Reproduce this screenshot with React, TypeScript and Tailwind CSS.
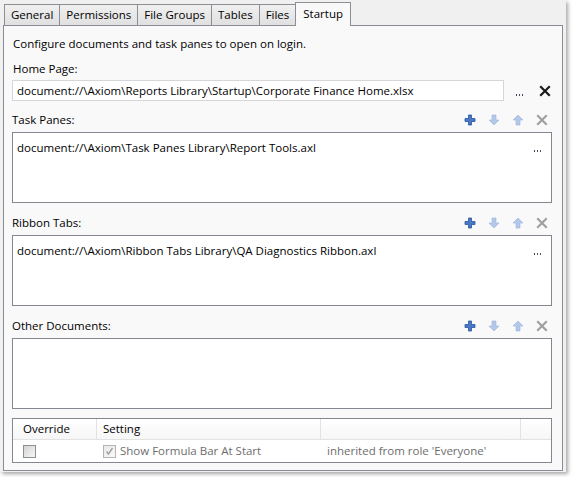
import React from 'react';

const font = { fontFamily: '"Open Sans", "Noto Sans", sans-serif' };

const tabs = ['General', 'Permissions', 'File Groups', 'Tables', 'Files'];

function PlusIcon() {
    return (
        <svg width="12" height="12" viewBox="0 0 12 12">
            <path d="M4.5 1h3v3.5H11v3H7.5V11h-3V7.5H1v-3h3.5z" fill="#4a78c8" stroke="#2b559e" strokeWidth="0.8" />
        </svg>
    );
}

function DownIcon() {
    return (
        <svg width="12" height="12" viewBox="0 0 12 12">
            <path d="M4 1h4v5h3L6 11 1 6h3z" fill="#b4c8ea" stroke="#9ab2de" strokeWidth="0.6" />
        </svg>
    );
}

function UpIcon() {
    return (
        <svg width="12" height="12" viewBox="0 0 12 12">
            <path d="M4 11h4V6h3L6 1 1 6h3z" fill="#b4c8ea" stroke="#9ab2de" strokeWidth="0.6" />
        </svg>
    );
}

function CloseIcon({ color }: { color: string }) {
    return (
        <svg width="12" height="12" viewBox="0 0 12 12">
            <path d="M2 2l8 8M10 2l-8 8" stroke={color} strokeWidth="2.2" strokeLinecap="square" />
        </svg>
    );
}

function Dots() {
    return (
        <span className="flex gap-[2px] items-end h-[2px]">
            <span className="w-[1px] h-[2px] bg-[#3a3a6a]" />
            <span className="w-[1px] h-[2px] bg-[#6a4a2a]" />
            <span className="w-[1px] h-[2px] bg-[#2a5a7a]" />
        </span>
    );
}

function Toolbar() {
    return (
        <div className="flex items-center gap-[12px] mr-[4px]">
            <PlusIcon />
            <DownIcon />
            <UpIcon />
            <CloseIcon color="#a0a0a0" />
        </div>
    );
}

function Section({ label, value, className }: { label: string; value?: string; className?: string }) {
    return (
        <div className={className}>
            <div className="flex items-center justify-between h-[16px]">
                <span>{label}</span>
                <Toolbar />
            </div>
            <div className="mt-[4px] h-[71px] border border-[#828790] bg-white flex items-start justify-between pl-[4px] pr-[10px] pt-[6px]">
                <span>{value}</span>
                {value && (
                    <span className="mt-[11px]">
                        <Dots />
                    </span>
                )}
            </div>
        </div>
    );
}

function Checkbox({ checked }: { checked?: boolean }) {
    return (
        <span
            className={
                checked
                    ? 'w-[13px] h-[13px] border border-[#b4b4b4] bg-gradient-to-br from-[#e8e8e8] to-[#fafafa] flex items-center justify-center'
                    : 'w-[13px] h-[13px] border border-[#8e8f8f] bg-gradient-to-br from-[#d4d4d4] to-[#f6f6f6] flex items-center justify-center'
            }
        >
            {checked && (
                <svg width="9" height="9" viewBox="0 0 9 9">
                    <path d="M1.5 4.5l2 2.5 4-6" stroke="#a0a0a0" strokeWidth="1.4" fill="none" />
                </svg>
            )}
        </span>
    );
}

export default function App() {
    return (
        <div className="w-[575px] h-[477px] bg-white text-[11.5px] text-black" style={font}>
            <div className="w-[566px] h-[472px] bg-[#f0f0f0] shadow-[2px_2px_4px_rgba(0,0,0,0.35)] pl-[3px] pt-[2px]">
                <div className="flex items-end h-[23px] pl-[1px]">
                    {tabs.map((t) => (
                        <div
                            key={t}
                            className="h-[21px] px-[6px] -mr-px border border-b-0 border-[#8c8e94] bg-gradient-to-b from-[#f0f0f0] to-[#e0e0e0] flex items-center leading-none"
                        >
                            {t}
                        </div>
                    ))}
                    <div className="h-[24px] px-[7px] border border-b-0 border-[#8c8e94] bg-[#f9f9f9] flex items-center leading-none -mb-px relative z-10 pb-[2px]">
                        Startup
                    </div>
                </div>
                <div className="w-[560px] h-[446px] border border-[#898c95] bg-[#f9f9f9] pl-[8px] pr-[10px] pt-[10px]">
                    <div className="h-[16px] leading-[16px] pl-[1px]">Configure documents and task panes to open on login.</div>
                    <div className="mt-[9px] h-[16px] leading-[16px] pl-[1px]">Home Page:</div>
                    <div className="mt-[3px] flex items-center">
                        <div className="w-[492px] h-[21px] border border-[#d4d6da] bg-white pl-[4px] flex items-center">
                            document://\Axiom\Reports Library\Startup\Corporate Finance Home.xlsx
                        </div>
                        <span className="ml-[12px] mt-[8px]">
                            <Dots />
                        </span>
                        <span className="ml-[16px]">
                            <CloseIcon color="#1a1a1a" />
                        </span>
                    </div>
                    <Section className="mt-[11px]" label="Task Panes:" value="document://\Axiom\Task Panes Library\Report Tools.axl" />
                    <Section className="mt-[12px]" label="Ribbon Tabs:" value="document://\Axiom\Ribbon Tabs Library\QA Diagnostics Ribbon.axl" />
                    <Section className="mt-[12px]" label="Other Documents:" />
                    <div className="mt-[9px] h-[45px] border border-[#828790] bg-white">
                        <div className="flex h-[21px] border-b border-[#e2e2e2] bg-gradient-to-b from-white to-[#f6f6f6]">
                            <div className="w-[84px] border-r border-[#e2e2e2] pl-[10px] flex items-center">Override</div>
                            <div className="w-[224px] border-r border-[#e2e2e2] pl-[6px] flex items-center">Setting</div>
                            <div className="w-[200px] border-r border-[#e2e2e2]"></div>
                            <div className="flex-1"></div>
                        </div>
                        <div className="flex items-center h-[22px]">
                            <div className="w-[84px] pl-[10px] flex items-center">
                                <Checkbox />
                            </div>
                            <div className="w-[224px] pl-[6px] flex items-center gap-[4px] text-[#6d6d6d]">
                                <Checkbox checked />
                                <span>Show Formula Bar At Start</span>
                            </div>
                            <div className="pl-[6px] text-[#6d6d6d]">inherited from role 'Everyone'</div>
                        </div>
                    </div>
                </div>
            </div>
        </div>
    );
}
